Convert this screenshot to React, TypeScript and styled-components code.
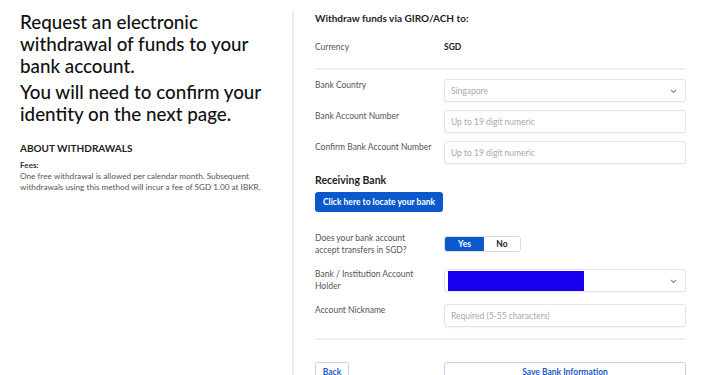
import React from "react";
import styled, { createGlobalStyle } from "styled-components";

const Global = createGlobalStyle`
  html, body { margin: 0; padding: 0; background: #fff; }
  body { font-family: Lato, "Open Sans", Arial, sans-serif; color: #1e1e1e; overflow: hidden; }
  * { box-sizing: border-box; }
`;

const Page = styled.div`
  display: flex;
  align-items: flex-start;
  width: 710px;
  height: 375px;
  overflow: hidden;
`;

const Left = styled.div`
  width: 292px;
  flex-shrink: 0;
  padding: 11px 20px 0 20px;
`;

const Heading = styled.h1<{ $mb?: number }>`
  margin: 0 0 ${(p) => p.$mb ?? 0}px 0;
  font-size: 18.8px;
  line-height: 22px;
  font-weight: 500;
  color: #111;
`;

const About = styled.h2`
  margin: 16px 0 0 0;
  font-size: 10px;
  font-weight: 700;
  color: #222;
  line-height: 14px;
`;

const FeesLabel = styled.div`
  margin-top: 5px;
  font-size: 8.2px;
  font-weight: 700;
  color: #333;
  line-height: 11px;
`;

const FeesText = styled.p`
  margin: 0;
  font-size: 8.2px;
  line-height: 11px;
  color: #555;
`;

const Right = styled.div`
  flex: 1;
  align-self: stretch;
  margin-top: 10px;
  border-left: 2px solid #eeeeee;
  padding: 0 24px 0 21px;
`;

const Title = styled.div`
  font-size: 10px;
  font-weight: 700;
  color: #1e1e1e;
  line-height: 14px;
  padding-top: 1px;
`;

const Row = styled.div<{ $mt?: number; $center?: boolean }>`
  display: grid;
  grid-template-columns: 129px 1fr;
  align-items: ${(p) => (p.$center ? "center" : "start")};
  margin-top: ${(p) => p.$mt ?? 0}px;
`;

const Label = styled.div<{ $shift?: number }>`
  font-size: 8.5px;
  line-height: 12px;
  color: #555;
  margin-top: ${(p) => p.$shift ?? 0}px;
`;

const Value = styled.div`
  font-size: 8.5px;
  font-weight: 700;
  color: #222;
  line-height: 12px;
`;

const Rule = styled.div<{ $mt: number }>`
  height: 2px;
  background: #f0f0f0;
  margin-top: ${(p) => p.$mt}px;
`;

const Field = styled.div`
  position: relative;
  height: 23px;
  border: 1px solid #e4e4e4;
  border-radius: 3px;
  box-shadow: 0 1px 2px rgba(0, 0, 0, 0.04);
  display: flex;
  align-items: center;
  padding-left: 6px;
  font-size: 8.5px;
  color: #a8a8a8;
  background: #fff;
`;

const Chevron = styled.svg`
  position: absolute;
  right: 8px;
  top: 50%;
  margin-top: -2px;
`;

const Redact = styled.div`
  width: 136px;
  height: 20px;
  background: #1600ee;
  margin-left: -3px;
`;

const Section = styled.div`
  margin-top: 9px;
  font-size: 10.5px;
  font-weight: 700;
  color: #1e1e1e;
  line-height: 14px;
`;

const PrimaryBtn = styled.button`
  display: block;
  margin-top: 5px;
  width: 128px;
  height: 20px;
  border: none;
  border-radius: 3px;
  background: #0b58cc;
  color: #fff;
  font-family: inherit;
  font-size: 8.5px;
  font-weight: 700;
  padding: 0;
`;

const Toggle = styled.div`
  display: flex;
  width: 77px;
  height: 16px;
  margin-top: 4px;
  border: 1px solid #dcdcdc;
  border-radius: 3px;
  overflow: hidden;
`;

const ToggleOpt = styled.div<{ $active?: boolean }>`
  flex: ${(p) => (p.$active ? "0 0 39px" : "1")};
  display: flex;
  align-items: center;
  justify-content: center;
  font-size: 8.5px;
  font-weight: 700;
  background: ${(p) => (p.$active ? "#0b58cc" : "#fff")};
  color: ${(p) => (p.$active ? "#fff" : "#222")};
`;

const Actions = styled.div`
  display: grid;
  grid-template-columns: 129px 1fr;
  margin-top: 22px;
`;

const OutlineBtn = styled.button<{ $w?: string }>`
  width: ${(p) => p.$w ?? "100%"};
  height: 20px;
  border: 1px solid #c3d3ee;
  border-radius: 3px;
  background: #fff;
  color: #1d5bc4;
  font-family: inherit;
  font-size: 8.5px;
  font-weight: 700;
  padding: 0;
`;

const ChevronIcon = () => (
  <Chevron width="7" height="5" viewBox="0 0 7 5">
    <path d="M1 1 L3.5 3.5 L6 1" fill="none" stroke="#888" strokeWidth="1.1" />
  </Chevron>
);

export default function App() {
  return (
    <>
      <Global />
      <Page>
        <Left>
          <Heading $mb={4}>
            Request an electronic withdrawal of funds to your bank account.
          </Heading>
          <Heading>You will need to confirm your identity on the next page.</Heading>
          <About>ABOUT WITHDRAWALS</About>
          <FeesLabel>Fees:</FeesLabel>
          <FeesText>
            One free withdrawal is allowed per calendar month. Subsequent withdrawals using
            this method will incur a fee of SGD 1.00 at IBKR.
          </FeesText>
        </Left>
        <Right>
          <Title>Withdraw funds via GIRO/ACH to:</Title>
          <Row $mt={16} $center>
            <Label>Currency</Label>
            <Value>SGD</Value>
          </Row>
          <Rule $mt={15} />
          <Row $mt={9}>
            <Label>Bank Country</Label>
            <Field>
              Singapore
              <ChevronIcon />
            </Field>
          </Row>
          <Row $mt={8}>
            <Label>Bank Account Number</Label>
            <Field>Up to 19 digit numeric</Field>
          </Row>
          <Row $mt={8}>
            <Label>Confirm Bank Account Number</Label>
            <Field>Up to 19 digit numeric</Field>
          </Row>
          <Section>Receiving Bank</Section>
          <PrimaryBtn>Click here to locate your bank</PrimaryBtn>
          <Row $mt={20}>
            <Label>
              Does your bank account
              <br />
              accept transfers in SGD?
            </Label>
            <Toggle>
              <ToggleOpt $active>Yes</ToggleOpt>
              <ToggleOpt>No</ToggleOpt>
            </Toggle>
          </Row>
          <Row $mt={13}>
            <Label $shift={-1}>
              Bank / Institution Account
              <br />
              Holder
            </Label>
            <Field>
              <Redact />
              <ChevronIcon />
            </Field>
          </Row>
          <Row $mt={12}>
            <Label>Account Nickname</Label>
            <Field>Required (5-55 characters)</Field>
          </Row>
          <Rule $mt={11} />
          <Actions>
            <OutlineBtn $w="34px">Back</OutlineBtn>
            <OutlineBtn>Save Bank Information</OutlineBtn>
          </Actions>
        </Right>
      </Page>
    </>
  );
}
